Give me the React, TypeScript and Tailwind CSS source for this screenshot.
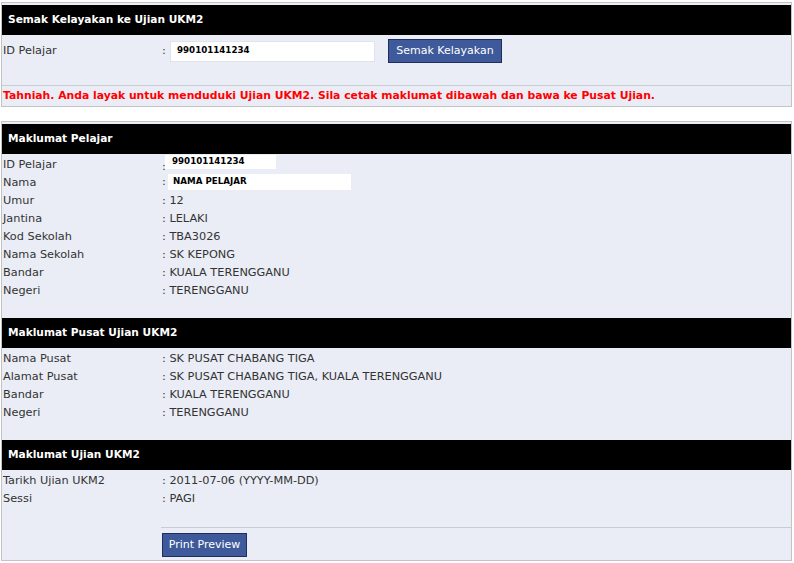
import React from "react";

const font = { fontFamily: '"DejaVu Sans", Verdana, sans-serif' };

function Header({ title }: { title: string }) {
  return (
    <div className="h-[30px] bg-black flex items-center pl-[6px] text-white font-bold text-[10.6px]">
      {title}
    </div>
  );
}

function Row({ label, value }: { label: string; value: React.ReactNode }) {
  return (
    <div className="h-[18px] flex items-center pl-[1px] pt-[2px] text-[11.3px] text-[#333]">
      <div className="w-[159px] shrink-0">{label}</div>
      <div>{value}</div>
    </div>
  );
}

export default function App() {
  return (
    <div className="w-[794px] h-[563px] bg-white pt-[2px] pl-[1px] pr-[2px] overflow-hidden" style={font}>
      <div className="border border-[#c3c3c3] bg-[#eaedf6] py-[2px]">
        <Header title="Semak Kelayakan ke Ujian UKM2" />
        <div className="mt-[4px] h-[24px] flex items-center pl-[1px] text-[11.3px] text-[#333]">
          <div className="w-[159px] shrink-0">ID Pelajar</div>
          <div className="w-[8px]">:</div>
          <div className="w-[205px] h-[21px] bg-white border border-[#dfe3ea] flex items-center pl-[6px] text-[8.7px] font-bold text-black">
            990101141234
          </div>
          <button className="ml-[13px] h-[24px] w-[114px] bg-[#3e5a9b] border border-[#1f2e5c] text-white text-[11px]">
            Semak Kelayakan
          </button>
        </div>
        <div className="mt-[22px] h-px bg-[#c8ccd3]" />
        <div className="h-[18px] flex items-center pl-[1px] pt-[3px] text-[10.8px] font-bold text-[#ff0000]">
          Tahniah. Anda layak untuk menduduki Ujian UKM2. Sila cetak maklumat dibawah dan bawa ke Pusat Ujian.
        </div>
      </div>

      <div className="mt-[14px] border border-[#c3c3c3] bg-[#eaedf6] pt-[2px] pb-[3px]">
        <Header title="Maklumat Pelajar" />
        <div className="mt-[1px]">
          <div className="h-[18px] flex items-center pl-[1px] text-[11.3px] text-[#333]">
            <div className="w-[159px] shrink-0 pt-[2px]">ID Pelajar</div>
            <div className="pt-[6px] w-[3px]">:</div>
            <div className="w-[111px] h-[14px] self-start bg-white flex items-center pl-[7px] text-[8.7px] font-bold text-black">
              990101141234
            </div>
          </div>
          <div className="h-[18px] flex items-center pl-[1px] text-[11.3px] text-[#333]">
            <div className="w-[159px] shrink-0 pt-[2px]">Nama</div>
            <div className="w-[6px]">:</div>
            <div className="w-[183px] h-[16px] bg-white flex items-center pl-[5px] text-[8.7px] font-bold text-black">
              NAMA PELAJAR
            </div>
          </div>
          <Row label="Umur" value=": 12" />
          <Row label="Jantina" value=": LELAKI" />
          <Row label="Kod Sekolah" value=": TBA3026" />
          <Row label="Nama Sekolah" value=": SK KEPONG" />
          <Row label="Bandar" value=": KUALA TERENGGANU" />
          <Row label="Negeri" value=": TERENGGANU" />
        </div>

        <div className="mt-[19px]">
          <Header title="Maklumat Pusat Ujian UKM2" />
        </div>
        <div className="mt-[1px]">
          <Row label="Nama Pusat" value=": SK PUSAT CHABANG TIGA" />
          <Row label="Alamat Pusat" value=": SK PUSAT CHABANG TIGA, KUALA TERENGGANU" />
          <Row label="Bandar" value=": KUALA TERENGGANU" />
          <Row label="Negeri" value=": TERENGGANU" />
        </div>

        <div className="mt-[19px]">
          <Header title="Maklumat Ujian UKM2" />
        </div>
        <div className="mt-[1px]">
          <Row label="Tarikh Ujian UKM2" value=": 2011-07-06 (YYYY-MM-DD)" />
          <Row label="Sessi" value=": PAGI" />
        </div>

        <div className="mt-[20px] ml-[159px] h-px bg-[#c8ccd3]" />
        <div className="ml-[160px] mt-[5px] flex">
          <button className="h-[24px] w-[85px] bg-[#3e5a9b] border border-[#1f2e5c] text-white text-[11px]">
            Print Preview
          </button>
        </div>
      </div>
    </div>
  );
}
